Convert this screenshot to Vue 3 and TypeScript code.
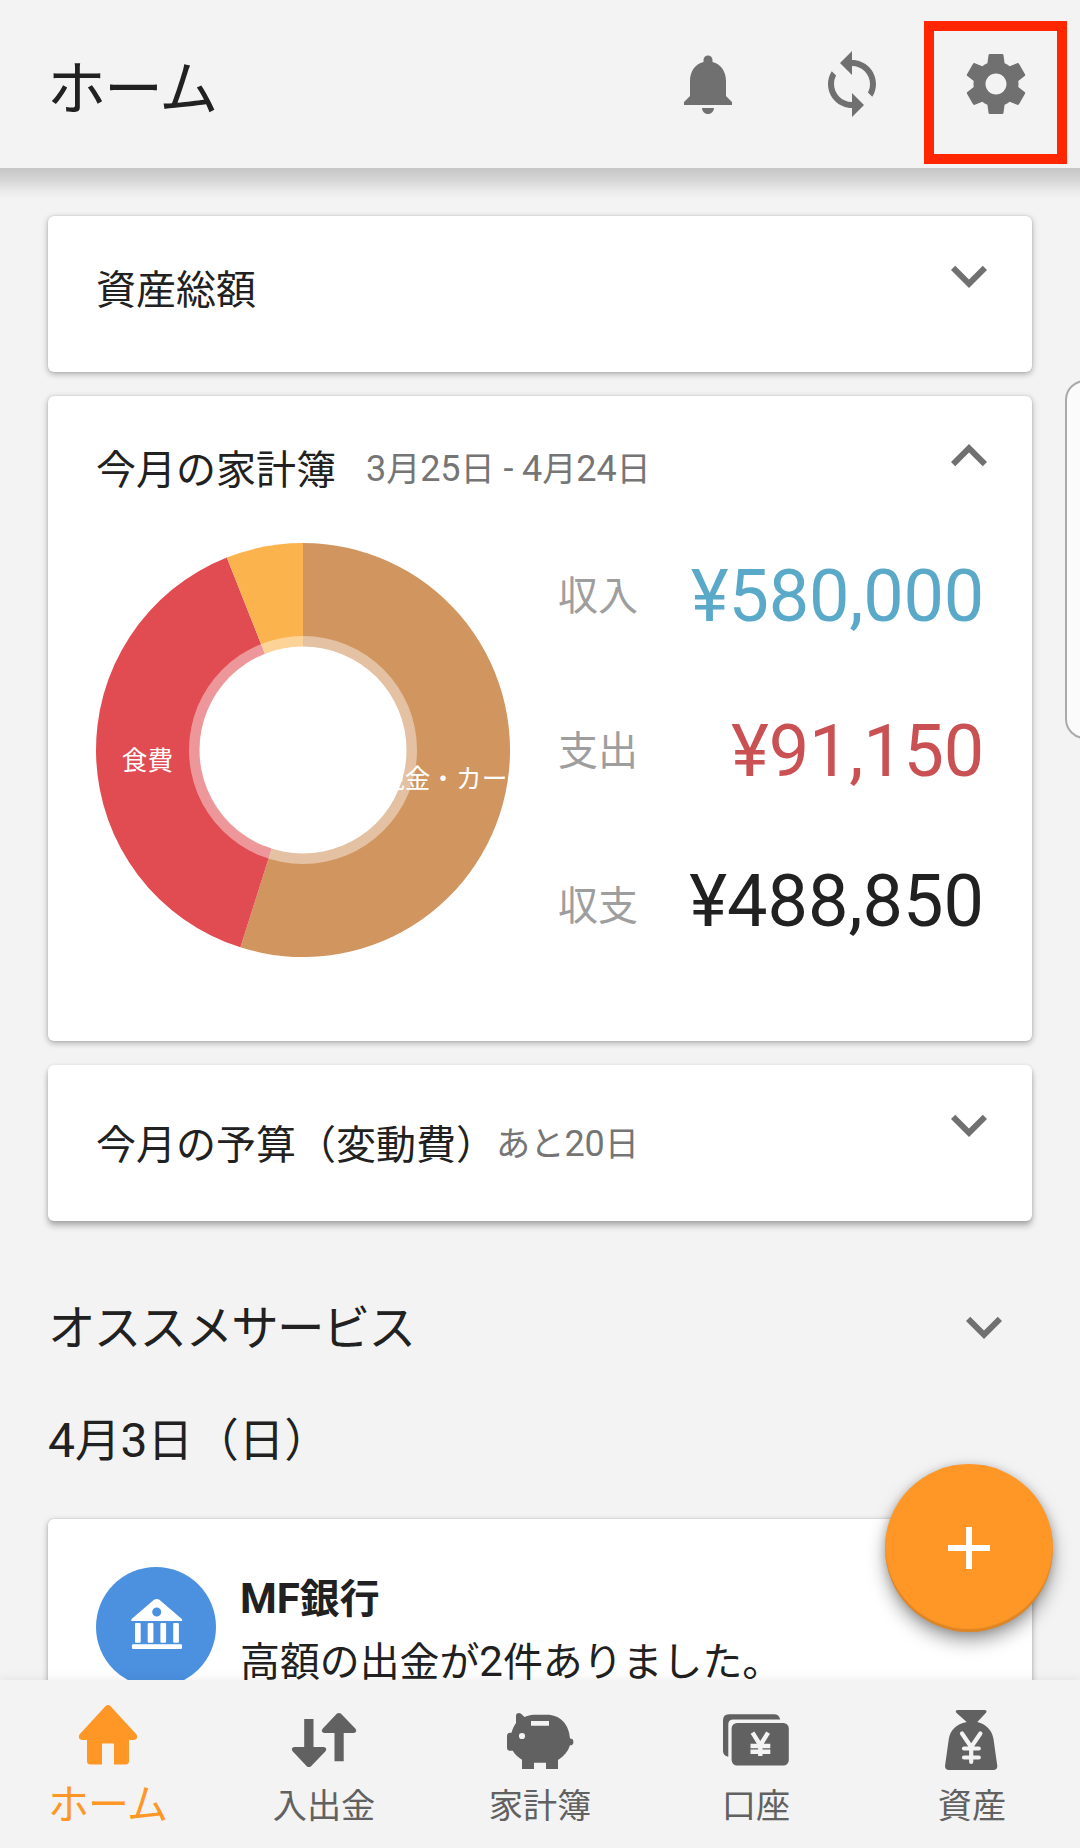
<script setup lang="ts">
import { h } from 'vue'

// Splits a string into Latin and Japanese runs, since the Japanese glyphs are set slightly smaller.
const Txt = (props: { t: string }) =>
  h(
    'span',
    { class: 'txt' },
    (props.t.match(/[\x20-\x7e]+|[^\x20-\x7e]+/g) ?? []).map((run) =>
      h('span', { class: /^[\x20-\x7e]/.test(run) ? 'latin' : 'cjk' }, run),
    ),
  )
Txt.props = ['t']

interface Slice {
  color: string
  from: number
  to: number
}

const slices: Slice[] = [
  { color: '#d1955f', from: 0, to: 197.6 },
  { color: '#e04c52', from: 197.6, to: 338.4 },
  { color: '#fbb44d', from: 338.4, to: 360 },
]

function wedge(s: Slice): string {
  const r = 207
  const point = (deg: number) => {
    const a = (deg * Math.PI) / 180
    return `${(r + r * Math.sin(a)).toFixed(2)} ${(r - r * Math.cos(a)).toFixed(2)}`
  }
  return `M${r} ${r}L${point(s.from)}A${r} ${r} 0 ${s.to - s.from > 180 ? 1 : 0} 1 ${point(s.to)}Z`
}

const totals = [
  { key: 'income', label: '収入', value: '¥580,000' },
  { key: 'expense', label: '支出', value: '¥91,150' },
  { key: 'balance', label: '収支', value: '¥488,850' },
]

const tabs = [
  { id: 'home', label: 'ホーム' },
  { id: 'transfer', label: '入出金' },
  { id: 'budget', label: '家計簿' },
  { id: 'account', label: '口座' },
  { id: 'asset', label: '資産' },
]

const chevronDown = 'M16.59 8.59L12 13.17 7.41 8.59 6 10l6 6 6-6z'
const chevronUp = 'M12 8l-6 6 1.41 1.41L12 10.83l4.59 4.58L18 14z'
</script>

<template>
  <div class="screen">
    <header class="bar">
      <h1>ホーム</h1>
      <div class="actions">
        <svg class="icon" viewBox="0 0 24 24"><path d="M12 22c1.1 0 2-.9 2-2h-4c0 1.1.89 2 2 2zm6-6v-5c0-3.07-1.64-5.64-4.5-6.32V4c0-.83-.67-1.5-1.5-1.5s-1.5.67-1.5 1.5v.68C7.63 5.36 6 7.92 6 11v5l-2 2v1h16v-1l-2-2z" /></svg>
        <svg class="icon" viewBox="0 0 24 24"><path d="M12 4V1L8 5l4 4V6c3.31 0 6 2.69 6 6 0 1.01-.25 1.97-.7 2.8l1.46 1.46C19.54 15.03 20 13.57 20 12c0-4.42-3.58-8-8-8zm0 14c-3.31 0-6-2.69-6-6 0-1.01.25-1.97.7-2.8L5.24 7.74C4.46 8.97 4 10.43 4 12c0 4.42 3.58 8 8 8v3l4-4-4-4v3z" /></svg>
        <div class="settings">
          <svg class="icon" viewBox="0 0 24 24"><path d="M19.43 12.98c.04-.32.07-.64.07-.98s-.03-.66-.07-.98l2.11-1.65c.19-.15.24-.42.12-.64l-2-3.46c-.12-.22-.39-.3-.61-.22l-2.49 1c-.52-.4-1.08-.73-1.69-.98l-.38-2.65C14.46 2.18 14.25 2 14 2h-4c-.25 0-.46.18-.49.42l-.38 2.65c-.61.25-1.17.59-1.69.98l-2.49-1c-.23-.09-.49 0-.61.22l-2 3.46c-.13.22-.07.49.12.64l2.11 1.65c-.04.32-.07.65-.07.98s.03.66.07.98l-2.11 1.65c-.19.15-.24.42-.12.64l2 3.46c.12.22.39.3.61.22l2.49-1c.52.4 1.08.73 1.69.98l.38 2.65c.03.24.24.42.49.42h4c.25 0 .46-.18.49-.42l.38-2.65c.61-.25 1.17-.59 1.69-.98l2.49 1c.23.09.49 0 .61-.22l2-3.46c.12-.22.07-.49-.12-.64l-2.11-1.65zM12 15.5c-1.93 0-3.5-1.57-3.5-3.5s1.57-3.5 3.5-3.5 3.5 1.57 3.5 3.5-1.57 3.5-3.5 3.5z" /></svg>
          <span class="highlight"></span>
        </div>
      </div>
    </header>

    <main class="content">
      <section class="card short">
        <h2>資産総額</h2>
        <svg class="icon chevron" viewBox="0 0 24 24"><path :d="chevronDown" /></svg>
      </section>

      <section class="card ledger">
        <div class="head">
          <h2>今月の家計簿</h2>
          <Txt class="period" t="3月25日 - 4月24日" />
          <svg class="icon chevron" viewBox="0 0 24 24"><path :d="chevronUp" /></svg>
        </div>
        <div class="summary">
          <svg class="chart" viewBox="0 0 414 414">
            <path v-for="s in slices" :key="s.color" :d="wedge(s)" :fill="s.color" />
            <circle cx="207" cy="207" r="114" fill="#fff" fill-opacity=".42" />
            <circle cx="207" cy="207" r="103.5" fill="#fff" />
            <text x="51.500" y="227" text-anchor="middle">食費</text>
            <text x="360" y="245" text-anchor="middle">現金・カード</text>
          </svg>
          <div class="totals">
            <div v-for="t in totals" :key="t.key" class="total" :class="t.key">
              <span class="label">{{ t.label }}</span>
              <span class="value">{{ t.value }}</span>
            </div>
          </div>
        </div>
      </section>

      <section class="card short budget">
        <h2>今月の予算（変動費）</h2>
        <Txt class="remaining" t="あと20日" />
        <svg class="icon chevron" viewBox="0 0 24 24"><path :d="chevronDown" /></svg>
      </section>

      <div class="section">
        <Txt class="kana" t="オススメサービス" />
        <svg class="icon" viewBox="0 0 24 24"><path :d="chevronDown" /></svg>
      </div>
      <div class="section date"><Txt t="4月3日（日）" /></div>

      <section class="card notice">
        <svg class="bank" viewBox="0 0 120 120">
          <circle cx="60" cy="60" r="60" fill="#4b91e0" />
          <g fill="#fff">
            <path fill-rule="evenodd" d="M58 32.8q2.7-1.8 5.4 0L85.8 52q1.2 2-.8 2H36.4q-2 0-.8-2zM60.7 40.5a4.5 4.5 0 1 0 0 9a4.5 4.5 0 1 0 0-9z" />
            <rect x="39" y="56" width="5.7" height="19.7" rx="1" />
            <rect x="51.7" y="56" width="5.7" height="19.7" rx="1" />
            <rect x="64.4" y="56" width="5.7" height="19.7" rx="1" />
            <rect x="77.2" y="56" width="5.7" height="19.7" rx="1" />
            <rect x="36" y="77.3" width="50" height="4.8" rx="1" />
          </g>
        </svg>
        <div class="message">
          <Txt class="sender" t="MF銀行" />
          <Txt t="高額の出金が2件ありました。" />
        </div>
      </section>
    </main>

    <nav class="tabs">
      <a v-for="tab in tabs" :key="tab.id" class="tab" :class="{ active: tab.id === 'home' }">
        <svg class="tab-icon" viewBox="0 0 72 72">
          <path v-if="tab.id === 'home'" d="M33.6 2q2.4-2 4.8 0L64.5 30.5q2 4-2 5.5H57v21q0 3.500-3.500 3.500H42V39.500H30v21H18.500q-3.500 0-3.500-3.500V36H9.500q-4-1.500-2-5.500z" />
          <g v-else-if="tab.id === 'transfer'">
            <path d="M16.200 15h9.300v28H36q3.500 1 1.500 4.200L22.800 62.400q-1.900 1.400-3.800 0L4.600 47.200Q2.500 44 6 43h10.200z" />
            <path d="M46.500 57.300h9.200V29H66q3.500-1 1.500-4.200L52.800 9.600q-1.900-1.400-3.800 0L34.600 24.800Q32.500 28 36 29h10.500z" />
          </g>
          <path v-else-if="tab.id === 'budget'" fill-rule="evenodd" d="M12 19V11.500C12 9 15.500 8 17.300 10L20.500 13C24 11.300 28 10.700 32 10.700H43C56 10.700 65 20 66 34.500A3.400 3.400 0 0 1 66 41.300C64 47.500 60 52.500 54 56V65H42V58.700H30V65H18V55.700C14 53.500 11 50.500 8.800 46.800H6Q3 46.800 3 43.500V32Q3 29 6 28.700H7.500C8.500 25 10 22 12 19zM27 17V21.700H45V17zM18 28.900a3.100 3.100 0 1 0 0 6.200a3.100 3.100 0 1 0 0-6.200z" />
          <g v-else-if="tab.id === 'account'">
            <path d="M8.300 52.800Q3 51.500 3 47V16.300q0-6 6-6h45q5 0 6.200 5.200H13.300q-5 0-5 5z" />
            <rect x="11.600" y="19" width="57.200" height="42.600" rx="5.500" />
            <path class="yen bill" d="M32.500 28.700l7.800 12.500 7.800-12.500M40.300 40v12M30.500 42h19.800M30.500 47.800h19.800" />
          </g>
          <g v-else>
            <path d="M21.800 6H48.500q3 .4 1.500 2.700L41.300 18C50 20 56 26 57.500 35L61.300 62q0 4-4 4H13q-4 0-4-4L12.800 35C14.500 26 20 20 30.700 18L20.300 8.700Q18.800 6.400 21.800 6z" />
            <path class="yen bag" d="M26 29.500L35.200 43 44.400 29.500M35.200 43V58M28 44.500h14.800M28 53.500h14.800" />
          </g>
        </svg>
        <span class="tab-label">{{ tab.label }}</span>
      </a>
    </nav>

    <button class="fab" type="button">
      <svg viewBox="0 0 24 24"><path d="M19 13h-6v6h-2v-6H5v-2h6V5h2v6h6z" /></svg>
    </button>
    <div class="edge-handle"></div>
  </div>
</template>

<style>
body {
  margin: 0;
}
.txt {
  white-space: pre;
}
.txt .latin,
.txt .cjk {
  line-height: 0;
}
.txt .cjk {
  font-family: 'Noto Sans CJK JP', sans-serif;
  font-size: 0.95em;
}
.txt.kana .cjk {
  font-size: 47.5px;
  letter-spacing: -1.7px;
}
</style>

<style scoped>
.screen {
  position: relative;
  display: flex;
  flex-direction: column;
  width: 1080px;
  height: 1848px;
  overflow: hidden;
  background: #f3f3f3;
  color: #212121;
  font-family: Roboto, 'Noto Sans CJK JP', sans-serif;
}
h1,
h2 {
  margin: 0;
  font-family: 'Noto Sans CJK JP', sans-serif;
  font-weight: 400;
}
.icon {
  display: block;
  flex: none;
  width: 72px;
  height: 72px;
  fill: #707070;
}
.bar {
  position: relative;
  z-index: 1;
  display: flex;
  flex: none;
  justify-content: space-between;
  align-items: center;
  box-sizing: border-box;
  height: 168px;
  padding: 0 48px 0 47px;
  background: #f3f3f3;
}
.bar::after {
  content: '';
  position: absolute;
  top: 100%;
  left: 0;
  right: 0;
  height: 32px;
  background: linear-gradient(rgba(0, 0, 0, 0.19), rgba(0, 0, 0, 0.12) 38%, rgba(0, 0, 0, 0.03) 75%, transparent);
}
.bar h1 {
  padding-top: 2px;
  font-size: 59px;
  letter-spacing: -2px;
  line-height: 80px;
}
.actions {
  display: flex;
  gap: 72px;
}
.settings {
  position: relative;
}
.highlight {
  position: absolute;
  top: -27px;
  left: -36px;
  box-sizing: border-box;
  width: 143px;
  height: 143px;
  border: 10px solid #ff2600;
}
.content {
  flex: 1;
  min-height: 0;
  box-sizing: border-box;
  padding: 48px 48px 0;
  overflow: hidden;
}
.card {
  box-sizing: border-box;
  margin-bottom: 24px;
  border-radius: 6px;
  background: #fff;
  box-shadow: 0 2px 6px rgba(0, 0, 0, 0.3), 0 0 2px rgba(0, 0, 0, 0.14);
}
.card h2 {
  font-size: 40px;
  line-height: 59px;
}
.short,
.head {
  display: flex;
  align-items: flex-start;
  height: 156px;
  padding: 42px 27px 0 48px;
}
.chevron {
  margin: -18px 0 0 auto;
}
.ledger {
  height: 645px;
}
.head {
  box-sizing: border-box;
  height: 147px;
}
.period,
.remaining {
  color: #757575;
  font-size: 36px;
  line-height: 63px;
}
.period {
  margin-left: 30px;
  letter-spacing: -0.1px;
}
.summary {
  display: flex;
  gap: 48px;
  padding: 0 48px;
}
.chart {
  flex: none;
  width: 414px;
  height: 414px;
  overflow: hidden;
}
.chart text {
  fill: #fff;
  font-family: 'Noto Sans CJK JP', sans-serif;
  font-size: 25.65px;
}
.totals {
  display: flex;
  flex: 1;
  flex-direction: column;
  gap: 50px;
}
.total {
  display: flex;
  justify-content: space-between;
  align-items: center;
  height: 105px;
}
.label {
  padding-bottom: 6px;
  color: #9e9e9e;
  font-family: 'Noto Sans CJK JP', sans-serif;
  font-size: 40px;
  line-height: 60px;
}
.value {
  padding-top: 2px;
  font-size: 72px;
  line-height: 90px;
}
.income .value {
  color: #5aa9c8;
  letter-spacing: -0.2px;
}
.expense .value {
  color: #c95153;
  letter-spacing: -0.2px;
}
.balance .value {
  padding-bottom: 10px;
}
.budget {
  padding-top: 48px;
  margin-bottom: 70px;
  box-shadow: 0 5px 6px rgba(0, 0, 0, 0.25), 0 1px 4px rgba(0, 0, 0, 0.14);
}
.budget .chevron {
  margin-top: -24px;
}
.section {
  display: flex;
  justify-content: space-between;
  height: 72px;
  padding-right: 12px;
  margin-bottom: 42px;
  font-size: 48px;
  line-height: 72px;
}
.section .kana {
  padding-top: 2px;
}
.notice {
  display: flex;
  gap: 24px;
  height: 222px;
  padding: 48px;
}
.bank {
  flex: none;
  width: 120px;
  height: 120px;
}
.message {
  display: flex;
  flex-direction: column;
  font-size: 42px;
  line-height: 63px;
}
.sender {
  font-weight: 700;
}
.tabs {
  position: relative;
  display: flex;
  flex: none;
  height: 168px;
  background: #f3f3f3;
  box-shadow: 0 -3px 9px rgba(0, 0, 0, 0.05);
}
.tab {
  display: flex;
  flex: 1;
  flex-direction: column;
  align-items: center;
  padding-top: 24px;
  color: #616161;
  font-size: 34.2px;
}
.tab.active {
  color: #ff9727;
  font-size: 41px;
  letter-spacing: -1px;
}
.tab-icon {
  width: 72px;
  height: 72px;
  fill: currentColor;
}
.tab-label {
  font-family: 'Noto Sans CJK JP', sans-serif;
  line-height: 55px;
}
.active .tab-label {
  padding-right: 1px;
  line-height: 50px;
}
.yen {
  fill: none;
  stroke: #f3f3f3;
}
.bill {
  stroke-width: 4.4;
}
.bag {
  stroke-width: 4.2;
  stroke-linecap: round;
  stroke-linejoin: round;
}
.fab {
  position: absolute;
  right: 27px;
  bottom: 216px;
  display: flex;
  justify-content: center;
  align-items: center;
  width: 168px;
  height: 168px;
  padding: 0;
  border: 0;
  border-radius: 50%;
  background: #ff9727;
  box-shadow: 0 9px 18px rgba(0, 0, 0, 0.36), 0 1px 9px rgba(0, 0, 0, 0.16), inset 0 -3px 1px rgba(120, 80, 30, 0.25);
}
.fab svg {
  width: 72px;
  height: 72px;
  fill: #fff;
}
.edge-handle {
  position: absolute;
  top: 380px;
  right: -10px;
  box-sizing: border-box;
  width: 25px;
  height: 359px;
  border: 2px solid #aaa;
  border-radius: 20px 0 0 20px;
  background: #fbfbfb;
}
</style>
